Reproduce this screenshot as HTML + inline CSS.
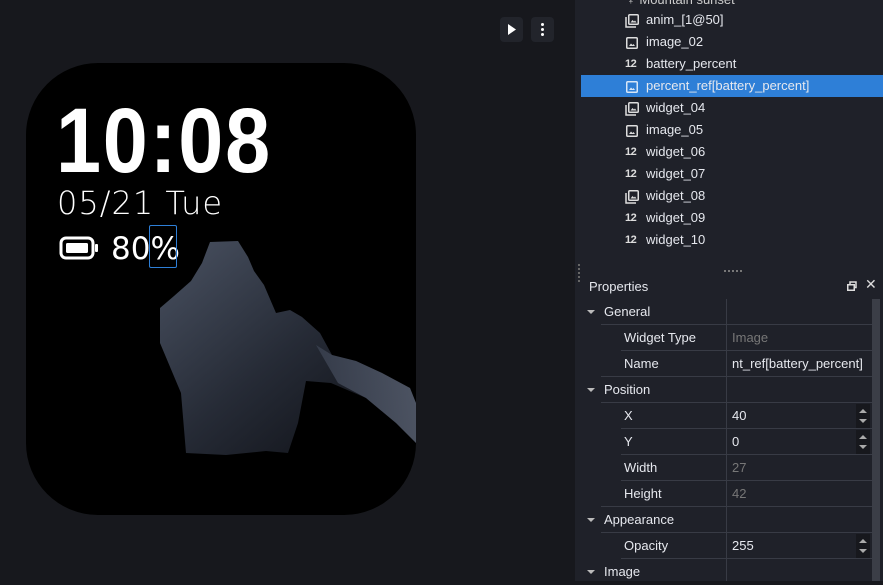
<!DOCTYPE html>
<html><head><style>
*{margin:0;padding:0;box-sizing:border-box}
body{width:883px;height:581px;overflow:hidden;background:#17181d;font-family:"Liberation Sans",sans-serif;position:relative}
.canvas{position:absolute;left:0;top:0;width:575px;height:581px;background:#17181d}
.btn{position:absolute;top:17px;width:23px;height:25px;background:#22242b;border-radius:4px}
.watch{position:absolute;left:26px;top:63px;width:390px;height:452px;background:#000;border-radius:72px;overflow:hidden}
.panel{position:absolute;left:575px;top:0;width:308px;height:581px;background:#1f2129;color:#e6e8ee;font-size:13px}
.row{position:absolute;left:0;width:308px;height:22px;line-height:22px}
.row .t{position:absolute;left:71px}
.row svg{position:absolute;left:50px;top:5px}
.row .n{position:absolute;left:50px;font-size:11px;font-weight:bold;color:#ddd;letter-spacing:-0.5px}
.sel{background:#2e7fd7}
.p{position:absolute;left:0;width:297px;height:26px;line-height:26px;font-size:13px}
.p .l{position:absolute;left:49px}
.p .g{position:absolute;left:29px}
.p .v{position:absolute;left:157px}
.p .ar{position:absolute;left:12px;top:11px;border-left:4px solid transparent;border-right:4px solid transparent;border-top:4px solid #bbb}
.line{position:absolute;height:1px;background:#383b45}
.spin{position:absolute;left:281px;top:1px;width:14px;height:24px;background:#17181d}
.spin:before{content:"";position:absolute;left:3px;top:5px;border-left:4px solid transparent;border-right:4px solid transparent;border-bottom:4px solid #aaa}
.spin:after{content:"";position:absolute;left:3px;top:15px;border-left:4px solid transparent;border-right:4px solid transparent;border-top:4px solid #aaa}
</style></head><body>
<div class="canvas">
<div class="btn" style="left:500px"><svg width="23" height="25"><path d="M8 7 L16 12.5 L8 18Z" fill="#fff"/></svg></div>
<div class="btn" style="left:531px"><svg width="23" height="25"><circle cx="11.5" cy="7.5" r="1.5" fill="#fff"/><circle cx="11.5" cy="12.5" r="1.5" fill="#fff"/><circle cx="11.5" cy="17.5" r="1.5" fill="#fff"/></svg></div>
<div class="watch">
<svg width="390" height="452" style="position:absolute;left:0;top:0">
<defs><linearGradient id="m" x1="0" y1="0" x2="1" y2="1"><stop offset="0" stop-color="#4a5262"/><stop offset="0.5" stop-color="#262b36"/><stop offset="1" stop-color="#0a0b10"/></linearGradient>
<linearGradient id="m2" x1="0" y1="0" x2="1" y2="0"><stop offset="0" stop-color="#3a4150"/><stop offset="1" stop-color="#5b6374"/></linearGradient></defs>
<polygon points="184,179 212,178 222,194 228,208 238,222 250,250 264,247 276,254 294,270 306,292 330,298 356,310 384,325 390,340 390,380 370,360 340,335 305,320 280,318 272,360 262,390 240,388 200,392 160,390 155,330 134,280 134,245 148,233 165,218 176,200" fill="url(#m)"/>
<polygon points="290,282 306,292 330,298 356,310 384,325 390,340 390,380 370,360 340,335 312,320" fill="url(#m2)" opacity="0.8"/>
</svg>
<div style="position:absolute;left:30px;top:32px;color:#fff;font-family:'Liberation Sans',sans-serif;font-weight:bold;font-size:92px;line-height:92px;letter-spacing:2px;transform:scaleX(0.88);transform-origin:0 0;white-space:nowrap">10:08</div>
<div style="position:absolute;left:31px;top:120px;color:#fff;font-family:'DejaVu Sans',sans-serif;font-size:32px;line-height:40px;font-weight:300;letter-spacing:1px">05/21 Tue</div>
<svg style="position:absolute;left:33px;top:173px" width="42" height="26"><rect x="2" y="2" width="32" height="20" rx="5" fill="none" stroke="#fff" stroke-width="3"/><rect x="7" y="7" width="22" height="10" rx="1.5" fill="#fff"/><rect x="36" y="8" width="3" height="8" rx="1" fill="#fff"/></svg>
<div style="position:absolute;left:85px;top:166px;color:#fff;font-family:'DejaVu Sans',sans-serif;font-size:31px;line-height:40px">80%</div>
<div style="position:absolute;left:123px;top:162px;width:28px;height:43px;border:1.5px solid #2e7fd7;border-radius:2px"></div>
</div>
</div>
<div class="panel">
<div class="row" style="top:-11px"><span class="t" style="left:51px;color:#ccc">♀ Mountain sunset</span></div>
<div class="row" style="top:9px"><svg width="14" height="14"><path d="M1 3V13H11" fill="none" stroke="#ddd" stroke-width="1.5"/><rect x="3.75" y="0.75" width="9.5" height="9.5" rx="1" fill="none" stroke="#ddd" stroke-width="1.5"/><path d="M5.5 8.5L7.5 6L9 7.5L10 6.5L11.5 8.5Z" fill="#ddd"/></svg><span class="t">anim_[1@50]</span></div>
<div class="row" style="top:31px"><svg width="14" height="14"><rect x="1.75" y="1.75" width="10.5" height="10.5" rx="1" fill="none" stroke="#ddd" stroke-width="1.5"/><path d="M4 10L6 7.5L7.5 9L8.5 8L10 10Z" fill="#ddd"/></svg><span class="t">image_02</span></div>
<div class="row" style="top:53px"><span class="n">12</span><span class="t">battery_percent</span></div>
<div class="row sel" style="top:75px;left:6px;width:302px"><svg width="14" height="14" style="left:44px"><rect x="1.75" y="1.75" width="10.5" height="10.5" rx="1" fill="none" stroke="#d7e6f7" stroke-width="1.5"/><path d="M4 10L6 7.5L7.5 9L8.5 8L10 10Z" fill="#d7e6f7"/></svg><span class="t" style="left:65px">percent_ref[battery_percent]</span></div>
<div class="row" style="top:97px"><svg width="14" height="14"><path d="M1 3V13H11" fill="none" stroke="#ddd" stroke-width="1.5"/><rect x="3.75" y="0.75" width="9.5" height="9.5" rx="1" fill="none" stroke="#ddd" stroke-width="1.5"/><path d="M5.5 8.5L7.5 6L9 7.5L10 6.5L11.5 8.5Z" fill="#ddd"/></svg><span class="t">widget_04</span></div>
<div class="row" style="top:119px"><svg width="14" height="14"><rect x="1.75" y="1.75" width="10.5" height="10.5" rx="1" fill="none" stroke="#ddd" stroke-width="1.5"/><path d="M4 10L6 7.5L7.5 9L8.5 8L10 10Z" fill="#ddd"/></svg><span class="t">image_05</span></div>
<div class="row" style="top:141px"><span class="n">12</span><span class="t">widget_06</span></div>
<div class="row" style="top:163px"><span class="n">12</span><span class="t">widget_07</span></div>
<div class="row" style="top:185px"><svg width="14" height="14"><path d="M1 3V13H11" fill="none" stroke="#ddd" stroke-width="1.5"/><rect x="3.75" y="0.75" width="9.5" height="9.5" rx="1" fill="none" stroke="#ddd" stroke-width="1.5"/><path d="M5.5 8.5L7.5 6L9 7.5L10 6.5L11.5 8.5Z" fill="#ddd"/></svg><span class="t">widget_08</span></div>
<div class="row" style="top:207px"><span class="n">12</span><span class="t">widget_09</span></div>
<div class="row" style="top:229px"><span class="n">12</span><span class="t">widget_10</span></div>
<div style="position:absolute;left:149px;top:270px;width:18px;border-top:2px dotted #777"></div>
<div style="position:absolute;left:3px;top:264px;height:18px;border-left:2px dotted #666"></div>
<div style="position:absolute;left:14px;top:279px;font-size:13px;color:#e6e8ee">Properties</div>
<svg style="position:absolute;left:272px;top:281px" width="10" height="10"><rect x="0.75" y="3.75" width="6.5" height="5.5" fill="none" stroke="#ddd" stroke-width="1.5"/><path d="M3 3.5V1H9V6.5H7.5" fill="none" stroke="#ddd" stroke-width="1.5"/></svg>
<div style="position:absolute;left:290px;top:276px;color:#ddd;font-size:14px">✕</div>
<div style="position:absolute;left:297px;top:299px;width:8px;height:282px;background:#3b3e47"></div>
<div style="position:absolute;left:151px;top:299px;width:1px;height:282px;background:#383b45"></div>
<div class="p" style="top:299px"><span class="ar"></span><span class="g">General</span></div>
<div class="line" style="left:26px;top:324px;width:271px"></div>
<div class="p" style="top:325px"><span class="l">Widget Type</span><span class="v" style="color:#777">Image</span></div>
<div class="line" style="left:46px;top:350px;width:251px"></div>
<div class="p" style="top:351px"><span class="l">Name</span><span class="v">nt_ref[battery_percent]</span></div>
<div class="line" style="left:26px;top:376px;width:271px"></div>
<div class="p" style="top:377px"><span class="ar"></span><span class="g">Position</span></div>
<div class="line" style="left:26px;top:402px;width:271px"></div>
<div class="p" style="top:403px"><span class="l">X</span><span class="v">40</span><span class="spin"></span></div>
<div class="line" style="left:46px;top:428px;width:251px"></div>
<div class="p" style="top:429px"><span class="l">Y</span><span class="v">0</span><span class="spin"></span></div>
<div class="line" style="left:46px;top:454px;width:251px"></div>
<div class="p" style="top:455px"><span class="l">Width</span><span class="v" style="color:#777">27</span></div>
<div class="line" style="left:46px;top:480px;width:251px"></div>
<div class="p" style="top:481px"><span class="l">Height</span><span class="v" style="color:#777">42</span></div>
<div class="line" style="left:26px;top:506px;width:271px"></div>
<div class="p" style="top:507px"><span class="ar"></span><span class="g">Appearance</span></div>
<div class="line" style="left:26px;top:532px;width:271px"></div>
<div class="p" style="top:533px"><span class="l">Opacity</span><span class="v">255</span><span class="spin"></span></div>
<div class="line" style="left:46px;top:558px;width:251px"></div>
<div class="p" style="top:559px"><span class="ar"></span><span class="g">Image</span></div>
</div>
</body></html>
